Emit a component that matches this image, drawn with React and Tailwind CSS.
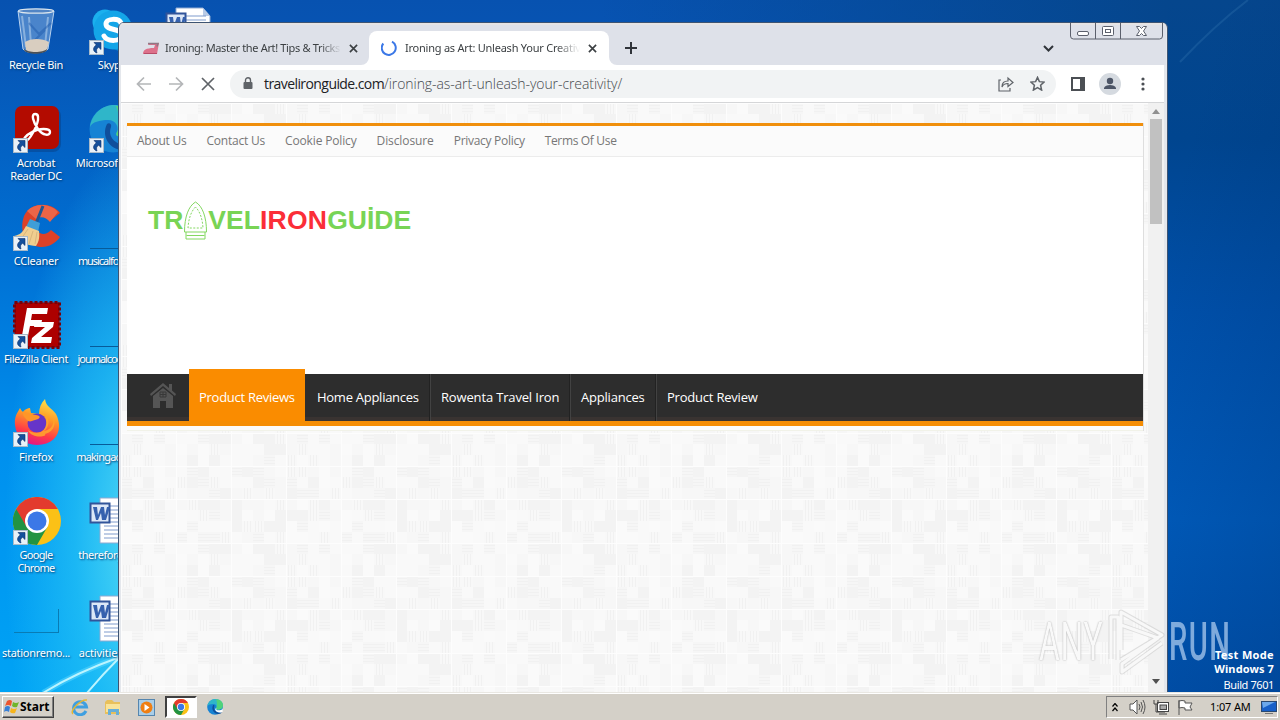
import React, { useLayoutEffect, useRef } from "react";

/* Text whose tracking is adjusted so that it fills a given width. */
function Fit({ w, className = "", children }) {
  const ref = useRef(null);
  useLayoutEffect(() => {
    const el = ref.current;
    el.style.letterSpacing = "0px";
    const natural = el.offsetWidth;
    el.style.letterSpacing = (w - natural) / children.length + "px";
  }, [w, children]);
  return (
    <span ref={ref} className={"inline-block whitespace-pre " + className}>
      {children}
    </span>
  );
}

const Arrow = () => (
  <svg className="absolute bottom-0 left-0" width="15" height="15" viewBox="0 0 15 15">
    <rect x=".5" y=".5" width="14" height="14" fill="#e9f1f8" stroke="#a9bac9" />
    <path d="M5 2.5h7v7l-2.3-2.2C7.5 8.700 7 10 8 13 3.500 11.500 3.500 7.500 7.300 4.900z" fill="#14509c" stroke="#0b2f6c" strokeWidth=".6" />
  </svg>
);

const Bin = () => (
  <svg width="48" height="48" viewBox="0 0 48 48">
    <path d="M5 4l5 38c3 5 21 5 25 0l6-38z" fill="#8eb6e4" fillOpacity=".5" stroke="#b8d2ef" strokeWidth="1" />
    <path d="M9 9l4 31M16 10l2 28M35 10l-3 29" stroke="#c4dbf2" strokeOpacity=".5" strokeWidth="2" />
    <path d="M16 16l10 11 12-11M20 35l12-12" stroke="#205cae" strokeOpacity=".5" strokeWidth="2" fill="none" />
    <path d="M12 35c6-4 17-4 24 0l-2 8c-5 4-17 4-21 0z" fill="#d9cec0" />
    <path d="M11 42c4 4 19 4 23 0v1c-3 5-20 5-23 0z" fill="#4b5055" />
    <ellipse cx="23" cy="4" rx="17.500" ry="2.200" fill="#5285c5" stroke="#dce6ee" strokeWidth="1.300" />
  </svg>
);
const Skype = () => (
  <svg width="48" height="48" viewBox="0 0 48 48">
    <circle cx="16" cy="15" r="12.500" fill="#1bb0ee" /><circle cx="32" cy="31" r="13" fill="#0b8fd4" />
    <circle cx="24" cy="23" r="19.500" fill="#14a5e8" />
    <path d="M32 16c-2-5-15-5-15 1 0 7 16 4 16 11 0 7-15 7-18 1" stroke="#fff" strokeWidth="5" fill="none" strokeLinecap="round" />
  </svg>
);
const Acrobat = () => (
  <svg width="48" height="48" viewBox="0 0 48 48">
    <rect x="3" y="3" width="45" height="44" rx="8" fill="#073f86" opacity=".5" />
    <rect x="2" y="1" width="44" height="43" rx="7" fill="#b30b00" />
    <path d="M22 9c-4 0-2 8 3 15 5 7 12 7 12 3 0-4-11-4-18 0-6 3-10 8-7 9 4 1 14-17 13-24 0-2-1-3-3-3z" fill="none" stroke="#fff" strokeWidth="2.400" />
  </svg>
);
const Edge = ({ s = 48 }) => (
  <svg width={s} height={s} viewBox="0 0 48 48">
    <circle cx="24" cy="24" r="23.500" fill="#1683d4" />
    <path d="M1 22C3 8 14 0 25 0c13 0 23 9 23 19 0 8-6 13-14 13-6 0-8-2-6-5 2-5-1-12-9-12-8 0-16 2-18 7z" fill="#2fb6c9" />
    <path d="M27 1c13 0 21 9 21 18 0 8-6 13-14 13-6 0-8-2-6-5 3-4 3-17-1-26z" fill="#50d27a" />
    <path d="M18 19c-6 12 2 26 17 26 4 0 8-2 11-6-5 2-13 3-19-2-6-4-7-10-5-15 1-3-2-5-4-3z" fill="#0f4f9c" />
    <path d="M28 27c-2 4 1 7 7 7 5 0 9-2 12-5v9c-10 6-20 1-22-5-1-3 1-5 3-6z" fill="#fff" fillOpacity={s < 30 ? 1 : 0} />
  </svg>
);
const CCleaner = () => (
  <svg width="48" height="48" viewBox="0 0 48 48">
    <path d="M47 10C38-2 17-1 11 13 5 31 15 44 29 44c7 0 14-4 18-10l-9-7c-6 7-15 4-16-4-1-9 8-13 15-5z" fill="#dd4128" />
    <path d="M45 9C37 0 22 0 14 8l9 8c5-3 10-2 14 3z" fill="#ed6547" />
    <path d="M30 3l-8 20" stroke="#1d5795" strokeWidth="3" />
    <path d="M17 16l10 4-2 9-12-5z" fill="#3f9ed8" />
    <path d="M13 23l13 5c1 8-1 12-3 15C16 43 6 39 1 33c6-1 9-4 12-10z" fill="#f0ce8f" />
    <path d="M15 26L8 36M20 28l-4 13M24 29l-2 12" stroke="#d9b67c" fill="none" />
  </svg>
);
const FileZilla = () => (
  <svg width="48" height="48" viewBox="0 0 48 48">
    <rect x="1.500" y="1.500" width="45" height="45" fill="#ad0000" stroke="#780008" strokeWidth="3" strokeDasharray="3 2" />
    <path d="M14 7h21l-1 6H19l-1 6h11l-1 6H17l-3 15H8zM22 21h19l-1 5-12 10h11l-1 6H18l1-5 13-11H21z" fill="#fff" />
  </svg>
);
const Firefox = () => (
  <svg width="48" height="48" viewBox="0 0 48 48">
    <defs><linearGradient id="ff" x1=".7" y1="0" x2=".4" y2="1"><stop stopColor="#ffe34b" /><stop offset=".4" stopColor="#ff9926" /><stop offset=".75" stopColor="#ff3b47" /><stop offset="1" stopColor="#e31587" /></linearGradient></defs>
    <path d="M2 26C1 17 5 13 7 9c1 2 2 3 3 4 2-3 5-4 7-4l1 5 8 1c0-6 2-11 6-15 1 8 7 9 11 15 8 16 0 31-19 31C11 46 3 37 2 26z" fill="url(#ff)" />
    <circle cx="24" cy="24" r="9.500" fill="#6635c9" />
    <path d="M15 22c-6-6-6-8-4-10 3 3 8 3 12 4 6 1 4 4-1 5-4 1-4 2-7 1z" fill="#ff9628" />
    <path d="M31 14c6 4 6 14 0 18 8-1 12-9 8-17 5 7 3 18-7 20 3 3-14 5-17-4 5 4 14 4 17-2 2-5 2-10-1-15z" fill="#ffa72b" fillOpacity=".85" />
  </svg>
);
const Chrome = ({ s = 48 }) => (
  <svg width={s} height={s} viewBox="0 0 48 48">
    <circle cx="24" cy="24" r="24" fill="#fbc116" />
    <path d="M24 24L3.200 12A24 24 0 0 0 24 48l10.400-18z" fill="#229342" />
    <path d="M24 12h20.800A24 24 0 0 0 3.200 12l10.400 18z" fill="#e33b2e" />
    <circle cx="24" cy="24" r="12" fill="#fff" /><circle cx="24" cy="24" r="9.500" fill="#3b78e7" />
  </svg>
);
const Word = () => (
  <svg width="48" height="48" viewBox="0 0 48 48">
    <path d="M11 1h27l7 8v37H11z" fill="#fff" stroke="#8ea9d0" />
    <path d="M38 1v8h7z" fill="#b9cbe6" />
    <path d="M15 9h26M15 13h26M15 17h26M15 21h26M15 25h26M15 29h26M15 33h26M15 37h26M15 41h26" stroke="#7f9bcc" />
    <rect x="1.500" y="6.500" width="19" height="19" fill="#dce7f7" stroke="#31549a" strokeWidth="2" />
    <path d="M4 10h4l1 8 3-8h3l1 8 2-8h3l-4 13h-4l-1-7-3 7H7z" fill="#3661ae" />
  </svg>
);
const Line = () => <div className="mt-[45px] ml-px h-px w-[46px] bg-[#075b99]" />;
const Corner = () => <div className="mt-[14px] ml-px h-[24px] w-[45px] border-r border-b border-[#097bb4]" />;

function Item({ art, arrow, labels }) {
  return (
    <div className="flex h-[98px] w-[76px] flex-col items-center">
      <div className="relative ml-[2px] h-12 w-12">{art}{arrow && <Arrow />}</div>
      <div className="flex flex-col items-center pt-[3px] text-[11px] leading-[13px] text-white [text-shadow:1px_1px_2px_#003a70]">
        {labels.map(([t, w]) => <Fit key={t} w={w}>{t}</Fit>)}
      </div>
    </div>
  );
}

function Desktop() {
  return (
    <div className="relative flex pt-[7px]">
      <div className="-ml-[2px] flex flex-col">
        <Item art={<Bin />} labels={[["Recycle Bin", 54]]} />
        <Item art={<Acrobat />} arrow labels={[["Acrobat", 38], ["Reader DC", 52]]} />
        <Item art={<CCleaner />} arrow labels={[["CCleaner", 44]]} />
        <Item art={<FileZilla />} arrow labels={[["FileZilla Client", 64]]} />
        <Item art={<Firefox />} arrow labels={[["Firefox", 34]]} />
        <Item art={<Chrome />} arrow labels={[["Google", 33], ["Chrome", 37]]} />
        <Item art={<Corner />} labels={[["stationremo...", 68]]} />
      </div>
      <div className="flex flex-col">
        <Item art={<Skype />} arrow labels={[["Skype", 29]]} />
        <Item art={<Edge />} arrow labels={[["Microsoft Edge", 72]]} />
        <Item art={<Line />} labels={[["musicalforces.rtf", 68]]} />
        <Item art={<Line />} labels={[["journalcode.png", 69]]} />
        <Item art={<Line />} labels={[["makingacts.png", 72]]} />
        <Item art={<Word />} labels={[["thereforget.rtf", 68]]} />
        <Item art={<Word />} labels={[["activitiesw.rtf", 66]]} />
      </div>
      <Item art={<Word />} labels={[["report", 30]]} />
    </div>
  );
}

const shades = ["#f3f3f3", "#f9f9f9", "#f8f8f8", "#fafafa", "#f6f6f6", "#f9f9f9", "#f7f7f7"];
function Texture() {
  const cells = [];
  let seed = 17;
  for (let y = 0; y < 10; y++)
    for (let x = 0; x < 15; x++) {
      seed = (seed * 1103515245 + 12345) % 2147483648;
      const k = Math.floor(seed / 65536) % 7;
      cells.push(<rect key={x + "-" + y} x={x * 11} y={y * 11} width="11" height="11" fill={shades[k]} />);
      if (k === 2 || k === 4)
        cells.push(<path key={"l" + x + "-" + y} d={k === 2 ? `M${x * 11 + 2.500} ${y * 11}v11m3-11v11m3-11v11` : `M${x * 11} ${y * 11 + 2.500}h11m-11 3h11m-11 3h11`} stroke="#f1f1f1" fill="none" />);
    }
  return (
    <svg className="absolute inset-0 h-full w-full">
      <defs><pattern id="fabric" width="165" height="110" patternUnits="userSpaceOnUse">{cells}<path d="M0 .5h165M.5 0v110M55.500 0v110M110.500 0v110M0 33.500h165M0 66.500h165" stroke="#fdfdfd" strokeWidth="1" /></pattern></defs>
      <rect width="100%" height="100%" fill="url(#fabric)" />
    </svg>
  );
}

const X = ({ s = 9, c = "#3c4043", w = 1.800 }) => (
  <svg width={s} height={s} viewBox="0 0 10 10"><path d="M1 1l8 8M9 1l-8 8" stroke={c} strokeWidth={w} /></svg>
);

function TabStrip() {
  return (
    <div className="relative flex h-[42px] shrink-0 items-end rounded-t-[4px] bg-[#dee1e9] text-[11px] text-[#3c4043] shadow-[inset_0_2px_0_#e6e4e4]">
      <div className="flex h-[34px] w-[249px] items-center pl-[22px]">
        <svg width="18" height="14" viewBox="0 0 18 14"><path d="M1 13c0-4 3-6 11-6l1-3H6l1-2h10l-2 11z" fill="#dd718b" /><path d="M6 2.500h10l-1 3" stroke="#8e7885" fill="none" strokeWidth="1.500" /><path d="M2 12.500h13" stroke="#b84c68" /></svg>
        <div className="ml-[5px] w-[176px] overflow-hidden [mask-image:linear-gradient(to_right,black_88%,transparent)]"><Fit w={175}>Ironing: Master the Art! Tips &amp; Tricks</Fit></div>
        <div className="ml-[8px] flex"><X /></div>
      </div>
      <div className="relative flex h-[34px] w-[240px] items-center rounded-t-lg bg-white pl-[12px]">
        <svg className="absolute bottom-0 -left-2" width="8" height="8"><path d="M8 0v8H0a8 8 0 0 0 8-8" fill="#fff" /></svg>
        <svg className="absolute -right-2 bottom-0" width="8" height="8"><path d="M0 0v8h8a8 8 0 0 1-8-8" fill="#fff" /></svg>
        <svg width="16" height="16" viewBox="0 0 16 16"><path d="M2.300 3.500A7 7 0 1 0 11 1.700" fill="none" stroke="#3b78e7" strokeWidth="2" /></svg>
        <div className="ml-[8px] w-[175px] overflow-hidden [mask-image:linear-gradient(to_right,black_86%,transparent)]"><Fit w={187}>Ironing as Art: Unleash Your Creativity</Fit></div>
        <div className="ml-[8px] flex"><X /></div>
      </div>
      <div className="flex h-[34px] items-center pl-[16px]"><svg width="12" height="12"><path d="M6 0v12M0 6h12" stroke="#30343a" strokeWidth="2" /></svg></div>
      <div className="ml-auto flex h-[34px] items-center pr-[112px]"><svg width="11" height="7"><path d="M1 1l4.500 4.500L10 1" fill="none" stroke="#30343a" strokeWidth="2" /></svg></div>
      <svg className="absolute top-0 right-[2px]" width="94" height="17" viewBox="0 0 94 17" fill="none" stroke="#5b606c">
        <path d="M.5 0v13q0 3 3 3h86q3 0 3-3V0M25.500 0v16M50.500 0v16" />
        <rect x="7.500" y="8.500" width="11" height="4" rx="1.500" fill="#fff" /><rect x="32.500" y="3.500" width="11" height="9" rx="1" fill="#fff" /><rect x="35.500" y="6.500" width="5" height="3" />
        <path d="M66.500 3.500h3l2 2 2-2h3l-3 4.500 3 4.500h-3l-2-2-2 2h-3l3-4.500z" fill="#fff" />
      </svg>
    </div>
  );
}

function Toolbar() {
  return (
    <div className="flex h-[38px] shrink-0 items-center border-b border-[#d5d6d8] bg-white pl-[15px]">
      <svg width="80" height="16" viewBox="0 0 80 16" fill="none" strokeWidth="1.700"><path d="M15 8H2M8 1.500L1.500 8 8 14.500M33 8h13M40 1.500L46.500 8 40 14.500" stroke="#b4b6b8" /><path d="M66 2l12 12M78 2L66 14" stroke="#5f6368" /></svg>
      <div className="ml-[14px] flex h-7 w-[826px] items-center rounded-full bg-[#f1f3f4] pl-[13px]">
        <svg width="10" height="13" viewBox="0 0 10 13"><rect x=".5" y="5" width="9" height="7" rx="1" fill="#5f6368" /><path d="M2.500 5V3.200a2.500 2.500 0 0 1 5 0V5" fill="none" stroke="#5f6368" strokeWidth="1.400" /></svg>
        <div className="ml-[11px] flex font-['Open_Sans','Noto_Sans',sans-serif] text-[14px] leading-5"><Fit w={120} className="text-[#202124]">travelironguide.com</Fit><Fit w={238} className="font-light text-[#45494e]">/ironing-as-art-unleash-your-creativity/</Fit></div>
        <div className="ml-auto flex items-center gap-[16px] pr-[11px]">
          <svg width="16" height="16" viewBox="0 0 16 16" fill="none" stroke="#5f6368" strokeWidth="1.200"><path d="M3 4H1v11h11v-3M4 11c0-4 2-6 6-6V2l5 4.500-5 4V7.500C7 7.500 5 8.500 4 11z" /></svg>
          <svg width="15" height="15" viewBox="0 0 16 16"><path d="M8 1.500l2 4.500 5 .5-3.700 3.300L12.400 15 8 12.300 3.600 15l1.100-5.200L1 6.500 6 6z" fill="none" stroke="#5f6368" strokeWidth="1.600" /></svg>
        </div>
      </div>
      <svg className="ml-[15px]" width="14" height="14"><rect x="1" y="1" width="12" height="12" fill="#fff" stroke="#4b4f54" strokeWidth="2" /><path d="M9 0h5v14H9z" fill="#4b4f54" /></svg>
      <svg className="ml-[14px]" width="22" height="22"><circle cx="11" cy="11" r="11" fill="#d5dae0" /><circle cx="11" cy="8" r="3.200" fill="#4c5566" /><path d="M5 16v-1c1-4 11-4 12 0v1z" fill="#4c5566" /></svg>
      <svg className="ml-[20px]" width="4" height="14" fill="#4b4f54"><circle cx="2" cy="2" r="1.600" /><circle cx="2" cy="7" r="1.600" /><circle cx="2" cy="12" r="1.600" /></svg>
    </div>
  );
}

function Logo() {
  return (
    <div className="flex items-center pt-[41px] pl-[21px] font-['Liberation_Sans',Arial,sans-serif] text-[26.5px] leading-[38px] font-bold text-[#78d455]">
      <Fit w={35}>TR</Fit>
      <svg className="mt-[3px]" width="25" height="40" viewBox="0 0 24 40" fill="none" stroke="#83d861">
        <path d="M12 1C5 5 1 16 1 31h22C23 16 19 5 12 1zM2.500 31v7h19v-7M3 34.500h18" />
        <path d="M12 6C7 11 5 19 4.500 27h15C19 19 17 11 12 6z" strokeDasharray="2 1.500" />
      </svg>
      <Fit w={52}>VEL</Fit><Fit w={67} className="text-[#fb2e38]">IRON</Fit><Fit w={84}>GUİDE</Fit>
    </div>
  );
}

const pages = [["About Us", 49], ["Contact Us", 59], ["Cookie Policy", 71], ["Disclosure", 57], ["Privacy Policy", 71], ["Terms Of Use", 72]];
const menu = [["Home Appliances", 102, "w-[126px]"], ["Rowenta Travel Iron", 118, "w-[140px]"], ["Appliances", 64, "w-[86px]"], ["Product Review", 91, "w-[120px]"]];

function Page() {
  return (
    <div className="flex min-h-0 flex-1">
      <div className="relative min-w-0 flex-1 overflow-hidden">
        <Texture />
        <div className="relative mt-[20px] ml-[6px] flex w-[1017px] flex-col border-r border-[#dedede] bg-white font-['Open_Sans','Noto_Sans',sans-serif]">
          <div className="flex h-[34px] items-center gap-5 border-t-[3px] border-b border-t-[#f08f0c] border-b-[#ececec] bg-[#fbfbfb] pl-[10px] text-[12px] text-[#777]">
            {pages.map(([t, w]) => <Fit key={t} w={w}>{t}</Fit>)}
          </div>
          <div className="h-[217px]"><Logo /></div>
          <nav className="flex h-[52px] items-stretch border-b-[5px] border-[#f58d04] bg-[#2d2d2d] text-[13px] text-white shadow-[inset_0_-4px_0_#393331]">
            <div className="flex w-[62px] items-center pl-[22px]">
              <svg className="-mt-1" width="28" height="27" viewBox="0 0 28 27" fill="#555"><path d="M14 1L1 12l1 2L14 4l12 10 1-2-4-3.500V2h-3v4z" /><path d="M4 14L14 6l10 8v12h-7v-7h-6v7H4z" /><path d="M11 10h6v5h-6zM14 10v5M11 12.500h6" stroke="#383838" fill="none" /></svg>
            </div>
            <div className="-mt-[5px] flex w-[116px] items-center bg-[#fa8c00] pt-[5px] pl-[10px]"><Fit w={96}>Product Reviews</Fit></div>
            {menu.map(([t, w, box], i) => (
              <div key={t} className={"flex items-center " + box + (i < 3 ? " border-r border-[#424242] shadow-[inset_-1px_0_0_#222]" : "") + (i === 0 ? " pl-[12px]" : " pl-[10px]")}><Fit w={w}>{t}</Fit></div>
            ))}
          </nav>
          <div className="h-[5px] border-b border-[#f1f2e8] bg-[#fbfbfb]" />
        </div>
      </div>
      <div className="flex w-[16px] flex-col items-center bg-[#f1f1f1] pt-[6px] pb-[8px]">
        <svg width="8" height="5"><path d="M4 0l4 5H0z" fill="#909090" /></svg>
        <div className="mt-[5px] h-[105px] w-[12px] bg-[#c1c1c1]" />
        <svg className="mt-auto" width="8" height="5"><path d="M4 5l4-5H0z" fill="#505050" /></svg>
      </div>
    </div>
  );
}

function Watermark() {
  return (
    <div className="absolute top-[607px] left-[1038px] h-[70px] w-[196px] font-['Roboto',sans-serif] text-[53px] leading-[70px]">
      <div className="absolute top-0 left-[1px] origin-left scale-x-[.6] text-[#f9f9f9] [text-shadow:0_0_2px_#999]"><Fit w={108}>ANY</Fit></div>
      <svg className="absolute top-0 left-[70px]" width="58" height="68" viewBox="0 0 58 68" fill="none" strokeLinejoin="round">
        <path d="M10 53V10H3v42M13 43V5l41 23-41 25M13 18l37 13-36 26v8l40-29" stroke="#c4c4c4" strokeWidth="5" opacity=".5" />
        <path d="M10 53V10H3v42M13 43V5l41 23-41 25M13 18l37 13-36 26v8l40-29" stroke="#f8f8f8" strokeWidth="3" />
      </svg>
      <div className="absolute top-0 left-[131px] origin-left scale-x-[.55] font-medium text-[#a9c9ed]/75"><Fit w={114}>RUN</Fit></div>
    </div>
  );
}

function Taskbar() {
  return (
    <div className="flex h-7 items-center border-t border-[#e9e7e2] bg-[#d4d0c8] pt-px pl-[2px] text-[11px] text-black shadow-[inset_0_1px_0_#fff]">
      <div className="flex h-[22px] w-[52px] items-center border border-t-white border-r-[#404040] border-b-[#404040] border-l-white pl-[1px] font-bold shadow-[inset_-1px_-1px_0_#808080]">
        <svg width="16" height="16" viewBox="0 0 16 16"><path d="M3 2q3-2 5 0L7 7Q4 5 1 7z" fill="#ed552e" /><path d="M9 3q3 2 6 0l-2 5q-3 1-5-1z" fill="#6fb52c" /><path d="M1 8q3-2 5 0l-1 5q-3-2-5 0z" fill="#3980d6" /><path d="M7 9q3 2 6 0l-2 5q-3 1-5-1z" fill="#f7b51d" /></svg>
        <Fit w={30} className="text-[12px]">Start</Fit>
      </div>
      <div className="flex items-center pl-[17px]">
        <svg width="18" height="18" viewBox="0 0 18 18"><path d="M15 13A6.500 6.500 0 1 1 15.500 9H4" fill="none" stroke="#3f9fe0" strokeWidth="3" /><path d="M2 16C-2 13 10 1 16 2" fill="none" stroke="#e4b735" strokeWidth="1.500" /></svg>
        <svg className="ml-[15px]" width="18" height="18" viewBox="0 0 18 18"><path d="M1 4l2-2h5l2 2h6v12H1z" fill="#e8c05b" /><path d="M2 6h14v8H2z" fill="#f9e399" /><path d="M4 11h11v6h-3v-3H7v3H4z" fill="#69afd7" /></svg>
        <svg className="ml-[16px]" width="17" height="17" viewBox="0 0 17 17"><rect x=".5" y=".5" width="16" height="16" fill="#a9cee8" stroke="#5586af" /><circle cx="8.500" cy="8.500" r="6" fill="#ef7f13" /><path d="M6.500 5l5 3.500-5 3.500z" fill="#fff" /></svg>
        <div className="ml-[10px] flex h-[22px] w-[32px] items-center justify-center border-2 border-t-[#404040] border-r-white border-b-white border-l-[#404040] bg-white"><Chrome s={16} /></div>
        <div className="ml-[10px]"><Edge s={16} /></div>
      </div>
      <div className="mr-[2px] ml-auto flex h-[22px] w-[172px] items-center border border-t-[#808080] border-r-white border-b-white border-l-[#808080] pl-[5px]">
        <svg width="6" height="9" fill="none" stroke="#000"><path d="M.5 3.500l2.500-3 2.500 3M.5 8l2.500-3 2.500 3" strokeWidth="1.200" /></svg>
        <svg className="ml-[11px]" width="17" height="16" viewBox="0 0 17 16" fill="#fff" stroke="#555"><path d="M1 5h3l4-4v14l-4-4H1z" /><path d="M10 5q2 3 0 6M12 3q3 5 0 10M14 1q4 7 0 14" fill="none" /></svg>
        <svg className="ml-[7px]" width="16" height="16" viewBox="0 0 16 16" fill="#fff" stroke="#444"><rect x="4.500" y="3.500" width="11" height="9" /><rect x="7" y="6" width="6.500" height="4.500" fill="#aaa" /><path d="M1 1v4h4V1M3 5v8h9M6 15h8" fill="none" /></svg>
        <svg className="ml-[8px]" width="17" height="16" viewBox="0 0 17 16" fill="#fff" stroke="#555"><path d="M2 1v15M2 2q3-1 6 0v2h7l-2 4 2 3H8V9q-3-1-6 0z" /></svg>
        <div className="ml-[16px] leading-3"><Fit w={41}>1:07 AM</Fit></div>
        <svg className="ml-[10px]" width="16" height="13" viewBox="0 0 16 13"><rect x=".5" y=".5" width="15" height="10" fill="#1760c8" stroke="#294970" /><path d="M1 1h13L2 7z" fill="#6ca9eb" /><path d="M4 12.500h8" stroke="#777" /></svg>
      </div>
    </div>
  );
}

export default function App() {
  return (
    <div className="flex h-[720px] w-[1280px] flex-col overflow-hidden font-['Noto_Sans','Open_Sans',sans-serif]">
      <div className="relative h-[692px] overflow-hidden bg-[linear-gradient(to_bottom,#0752b0_0%,#0754b3_5%,#006ed2_35%,#0090ee_65%,#00a3f5_100%)]">
        <div className="absolute inset-0 bg-[radial-gradient(ellipse_140px_400px_at_145px_540px,#55dcf5_0%,rgba(41,199,246,.65)_50%,transparent_100%)]" />
        <div className="absolute inset-y-0 right-[113px] w-[567px] bg-[linear-gradient(to_right,transparent,#05468d)]" />
        <div className="absolute inset-y-0 right-0 w-[113px] bg-[linear-gradient(105deg,transparent_20%,rgba(0,48,112,.3)),linear-gradient(to_bottom,#05468d_0%,#00458f_20%,#0050aa_45%,#005cbd_75%,#0052ae_100%)]" />
        <svg className="absolute inset-0" width="1280" height="692" fill="none"><path d="M1180 62Q1215 25 1248 0" stroke="#397bb2" strokeWidth="2" opacity=".3" /><path d="M43 693Q75 673 120 657" stroke="#5bd7ff" strokeWidth="6" opacity=".5" /><path d="M43 693Q75 673 120 657M87 693Q102 675 120 657" stroke="#baf4ff" strokeWidth="2" /></svg>
        <Desktop />
        <main className="absolute top-[22px] left-[118px] flex h-[671px] w-[1050px] flex-col rounded-t-md border border-[#3e5472] bg-[#e4e7ec] px-[2px]">
          <div className="-mx-px flex min-h-0 flex-1 flex-col"><TabStrip /></div>
          <div className="mr-px flex h-[627px] shrink-0 flex-col"><Toolbar /><Page /></div>
        </main>
        <Watermark />
        <div className="absolute right-[6px] -bottom-[2px] flex flex-col items-end text-[11px] leading-[14px] text-white">
          <Fit w={59} className="font-bold">Test Mode</Fit><Fit w={60} className="font-bold">Windows 7</Fit><Fit w={50} className="leading-[18px]">Build 7601</Fit>
        </div>
      </div>
      <Taskbar />
    </div>
  );
}
